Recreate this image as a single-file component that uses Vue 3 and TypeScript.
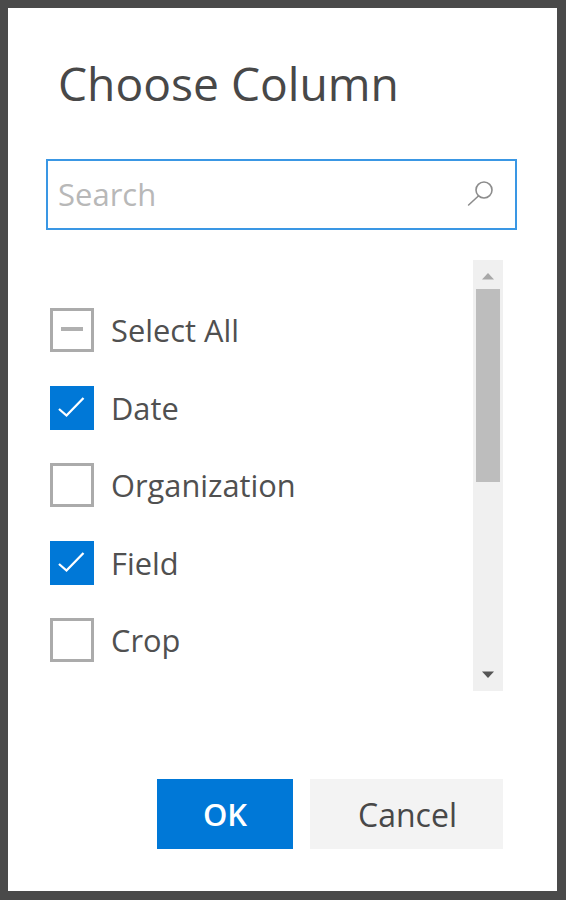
<script setup lang="ts">
interface Column { label: string; state: "mixed" | "on" | "off" }
const columns: Column[] = [
  { label: "Select All", state: "mixed" },
  { label: "Date", state: "on" },
  { label: "Organization", state: "off" },
  { label: "Field", state: "on" },
  { label: "Crop", state: "off" },
];
</script>

<template>
  <div class="frame">
    <div class="dialog">
      <h1 class="title">Choose Column</h1>
      <div class="search">
        <span class="placeholder">Search</span>
        <svg class="glass" width="30" height="30" viewBox="0 0 30 30" fill="none">
          <circle cx="18" cy="12" r="8" stroke="#8c8c8c" stroke-width="1.6" />
          <path d="M12.4 18 L2.6 27" stroke="#8c8c8c" stroke-width="1.6" stroke-linecap="round" />
        </svg>
      </div>
      <div class="listwrap">
        <ul class="list">
          <li v-for="c in columns" :key="c.label" class="row">
            <span class="box" :class="c.state">
              <span v-if="c.state === 'mixed'" class="dash"></span>
              <svg v-if="c.state === 'on'" width="44" height="44" viewBox="0 0 44 44" fill="none">
                <path d="M9 23 L16.5 29.5 L33.5 12" stroke="#fff" stroke-width="2.3" />
              </svg>
            </span>
            <span class="label">{{ c.label }}</span>
          </li>
        </ul>
        <div class="scrollbar">
          <svg class="arrow" width="14" height="8" viewBox="0 0 14 8"><path d="M1 7.5 L7 1 L13 7.5 Z" fill="#a8a8a8" /></svg>
          <div class="track"><div class="thumb"></div></div>
          <svg class="arrow" width="14" height="8" viewBox="0 0 14 8"><path d="M1 .5 L13 .5 L7 7 Z" fill="#555" /></svg>
        </div>
      </div>
      <div class="actions">
        <button class="btn ok">OK</button>
        <button class="btn cancel">Cancel</button>
      </div>
    </div>
  </div>
</template>

<style scoped>
.frame { box-sizing: border-box; width: 566px; height: 900px; background: #4a4a4a; padding: 8px;
  font-family: "Open Sans", "Liberation Sans", sans-serif; }
.dialog { box-sizing: border-box; width: 549px; height: 883px; background: #fff; display: flex; flex-direction: column;
  padding: 0 54px 0 38px; }
.title { margin: 47px 0 0 12px; font-size: 46.2px; font-weight: 400; line-height: 58px; color: #484848; }
.search { box-sizing: border-box; width: 471px; height: 71px; margin-top: 46px; border: 2px solid #3a97e4;
  display: flex; align-items: center; justify-content: space-between; padding: 0 19px 0 10px; }
.placeholder { font-size: 31px; color: #b8b8b8; margin-top: -1px; }
.glass { margin-top: -4px; }
.listwrap { display: flex; justify-content: space-between; height: 431px; margin-top: 30px; }
.list { list-style: none; margin: 0; padding: 0 0 0 4px; }
.row { display: flex; align-items: center; height: 44px; margin-top: 33.5px; }
.row:first-child { margin-top: 48px; }
.box { box-sizing: border-box; width: 44px; height: 44px; border: 3px solid #ababab; display: flex; align-items: center;
  justify-content: center; flex: none; }
.box.on { border: none; background: #0078d7; }
.dash { width: 22px; height: 4px; background: #b0b0b0; margin-top: -2px; }
.label { margin-left: 17px; font-size: 30.8px; color: #505050; }
.scrollbar { width: 30px; background: #f0f0f0; display: flex; flex-direction: column; align-items: center; padding: 12px 0; box-sizing: border-box; }
.arrow { flex: none; }
.track { flex: 1; width: 24px; padding-top: 9px; margin-bottom: 8px; }
.thumb { height: 193px; background: #bdbdbd; }
.actions { display: flex; justify-content: flex-end; gap: 17px; margin-top: 88px; }
.btn { height: 70px; border: none; padding: 0; font-family: inherit; font-size: 32px; }
.ok { width: 136px; background: #0078d7; color: #fff; font-weight: 600; font-size: 31px; }
.cancel { width: 193px; background: #f3f3f3; color: #484848; padding-left: 2px; }
</style>
